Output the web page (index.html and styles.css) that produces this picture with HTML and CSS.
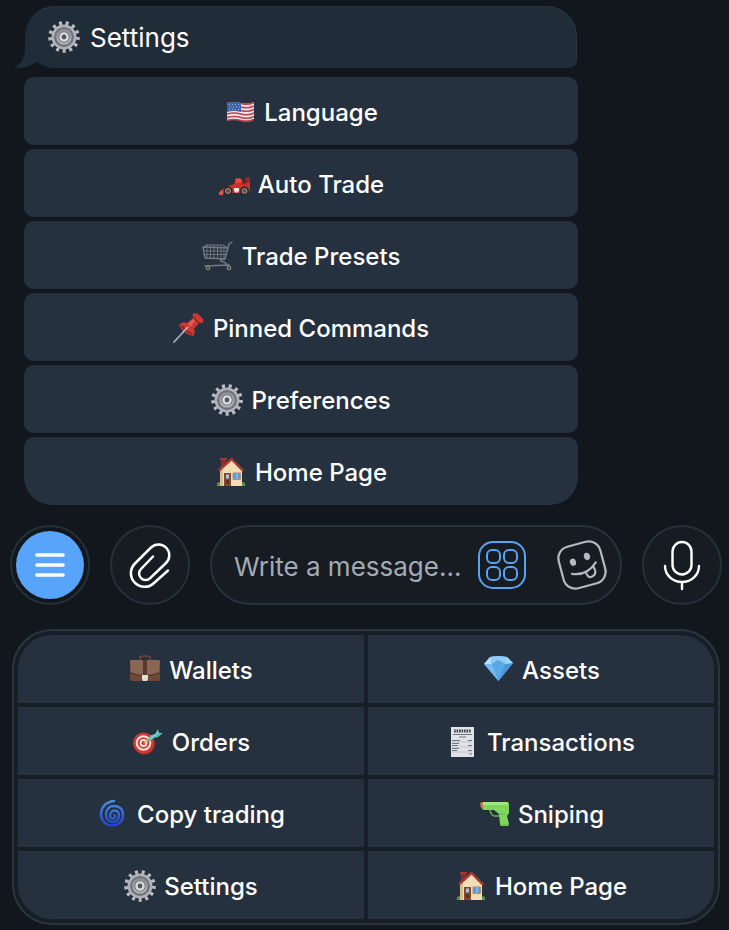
FILE: index.html
```html
<!DOCTYPE html>
<html lang="en">

<head>
    <meta charset="UTF-8">
    <meta name="viewport" content="width=device-width, initial-scale=1.0">
    <title>Settings</title>
    <link rel="stylesheet" href="styles.css">
</head>

<body>
    <!-- Icons used more than once -->
    <svg class="icon-defs" aria-hidden="true">
        <defs>
            <linearGradient id="metal" x1="0" y1="0" x2="0" y2="1">
                <stop offset="0" stop-color="#8b8d94" />
                <stop offset="1" stop-color="#b9bac0" />
            </linearGradient>
            <symbol id="gear" viewBox="0 0 32 32">
                <circle cx="16" cy="16" r="13.500" fill="none" stroke="#bcbdc4" stroke-width="4.600" pathLength="26" stroke-dasharray="0.900 1.100" />
                <circle cx="16" cy="16" r="11" fill="none" stroke="#b0b1b8" stroke-width="3" />
                <circle cx="16" cy="16" r="9.700" fill="#6c6e74" />
                <circle cx="16" cy="16" r="8" fill="url(#metal)" stroke="#85878d" stroke-width="1" />
                <circle cx="16" cy="16" r="5.600" fill="#66686f" />
                <circle cx="16" cy="16" r="3.600" fill="#54575e" stroke="#dadbe0" stroke-width="2.400" />
            </symbol>
            <symbol id="house" viewBox="0 0 32 32">
                <path d="M2 30q-1-4 3-4h22q4 0 3 4z" fill="#5d9440" />
                <path d="M6 3h5v8H6z" fill="#8b2f26" />
                <path d="M5 2h7v2H5z" fill="#a8392d" />
                <path d="M5 14L16.500 4L27 15v15H5z" fill="#f0ddb5" />
                <path d="M5 14l3-3v19H5z" fill="#d8bf91" />
                <path d="M4 14.500L16.500 3L28.500 15" fill="none" stroke="#a83a2f" stroke-width="2.400" stroke-linejoin="round" />
                <path d="M9 17h7v13H9z" fill="#81492d" />
                <path d="M11 18.500h3v4h-3z" fill="#a5c6dc" />
                <path d="M11 24h3v4h-3z" fill="#5f321e" />
                <path d="M18 17h7.500v6.500H18z" fill="#5d9bd6" stroke="#b48f67" />
                <path d="M22 17.500v5.500" stroke="#a9cdec" />
            </symbol>
        </defs>
    </svg>

    <main class="chat">
        <!-- Bot message -->
        <section class="message">
            <div class="bubble">
                <svg class="bubble-tail" viewBox="0 0 32 30" aria-hidden="true">
                    <path d="M12 0v10C12 20 8 26 1 29.500C10 31 17 28 24 24L32 12V0z" />
                </svg>
                <svg class="icon" aria-hidden="true"><use href="#gear" /></svg>
                <span>Settings</span>
            </div>
            <div class="inline-keyboard">
                <button type="button" class="key">
                    <svg class="icon" viewBox="0 0 32 32" aria-hidden="true">
                        <path d="M3 7q7-2 14 0t13-1v17q-7 3-14 1T3 24z" fill="#e9e6ed" />
                        <path d="M3 7.500q7-2 14 0t13-1M3 11q7-2 14 0t13-1M3 14.500q7-2 14 0t13-1M3 18q7-2 14 0t13-1M3 21.500q7-2 14 0t13-1M3 24.500q7-2 14 0t13-1" fill="none" stroke="#c14652" stroke-width="1.600" />
                        <path d="M3 7q7-2 14 0v9q-7-2-14 0z" fill="#3d65a8" />
                        <path d="M5 8.500h11M6 11h10M5 13.500h11" stroke="#8fa8d2" stroke-dasharray="1 2" />
                    </svg>
                    <span>Language</span>
                </button>
                <button type="button" class="key">
                    <svg class="icon" viewBox="0 0 32 32" aria-hidden="true">
                        <path d="M1 26l2-4 8-4 5-2 2-5h6l1 5 3-1v-4l4-1v13l-4 2H3z" fill="#cf2f2a" />
                        <path d="M17 11l5-1 2 4-6 1z" fill="#ec4b3d" />
                        <path d="M27 10l5-1v5l-4 1z" fill="#a5211f" />
                        <path d="M1 27v-3l5-2-1 5z" fill="#e65349" />
                        <circle cx="10" cy="23" r="4.500" fill="#26272a" />
                        <circle cx="26.500" cy="23" r="4.500" fill="#26272a" />
                        <circle cx="10" cy="23" r="2.500" fill="#565143" stroke="#a39b83" />
                        <circle cx="26.500" cy="23" r="2.500" fill="#565143" stroke="#a39b83" />
                        <path d="M16 20h5v3l-2.500 2-2.500-2z" fill="#f3e4e2" />
                    </svg>
                    <span>Auto Trade</span>
                </button>
                <button type="button" class="key">
                    <svg class="icon" viewBox="0 0 32 32" aria-hidden="true">
                        <g fill="none" stroke="#737b82" stroke-linecap="round">
                            <path d="M30 2l-3 2-4 15-20-1L1 7l25 1" stroke-width="1.400" />
                            <path d="M4 5h17l5 3M4 5L1 8M2 11h23M2 14.500h22M5 5v13M8.500 5v13M12 5v13M15.500 5v14M19 5v14M22 6v13" stroke-width="0.900" />
                            <path d="M22 19q-7 2 0 3l5 4M3 26l24-1" stroke-width="1.500" />
                        </g>
                        <g fill="#343a41" stroke="#96998f">
                            <circle cx="6" cy="28" r="1.800" />
                            <circle cx="27" cy="28" r="1.800" />
                        </g>
                    </svg>
                    <span>Trade Presets</span>
                </button>
                <button type="button" class="key">
                    <svg class="icon" viewBox="0 0 32 32" aria-hidden="true">
                        <path d="M1 30L14 16" stroke="#9eb2c0" stroke-width="1.800" stroke-linecap="round" />
                        <path d="M6 13q3-4 8-2l6-5q-1-4 1-5 5 0 9 6 1 3-1 4h-3l-5 6q2 4-1 7Q10 22 6 13z" fill="#cc3832" />
                        <path d="M8 13q5 7 11 9M21 5q2 5 6 6" fill="none" stroke="#8f2426" stroke-width="1.500" />
                        <path d="M15 12l5-5 2 2-5 6z" fill="#e95d50" />
                        <path d="M10 20l5-5" stroke="#c2ccd3" stroke-width="1.500" />
                    </svg>
                    <span>Pinned Commands</span>
                </button>
                <button type="button" class="key">
                    <svg class="icon" aria-hidden="true"><use href="#gear" /></svg>
                    <span>Preferences</span>
                </button>
                <button type="button" class="key">
                    <svg class="icon" aria-hidden="true"><use href="#house" /></svg>
                    <span>Home Page</span>
                </button>
            </div>
        </section>

        <!-- Message input -->
        <form class="composer">
            <button type="button" class="round-btn menu-btn" aria-label="Menu">
                <svg viewBox="0 0 68 68" aria-hidden="true">
                    <path d="M21 24h26M21 34h26M21 44h26" stroke="#fff" stroke-width="3.600" stroke-linecap="round" />
                </svg>
            </button>
            <button type="button" class="round-btn" aria-label="Attach file">
                <svg viewBox="0 0 76 76" aria-hidden="true">
                    <path d="M41 29.500L29 42a6.500 6.500 0 0 0 9.200 9.200L54 36A10.500 10.500 0 0 0 39 20.500L23 36.500A13.500 13.500 0 0 0 42 56L56 43.500" fill="none" stroke="#fff" stroke-width="2.500" stroke-linecap="round" stroke-linejoin="round" />
                </svg>
            </button>
            <div class="message-field">
                <input type="text" class="message-input" placeholder="Write a message..." aria-label="Message">
                <button type="button" class="field-btn" aria-label="Bot keyboard">
                    <svg viewBox="0 0 52 52" fill="none" stroke="#59a3f3" stroke-width="2" aria-hidden="true">
                        <rect x="3" y="3" width="46" height="46" rx="14" />
                        <rect x="11" y="11" width="13" height="13" rx="5" />
                        <rect x="28" y="11" width="13" height="13" rx="5" />
                        <rect x="11" y="28" width="13" height="13" rx="5" />
                        <rect x="28" y="28" width="13" height="13" rx="5" />
                    </svg>
                </button>
                <button type="button" class="field-btn" aria-label="Stickers">
                    <svg viewBox="0 0 52 52" fill="none" stroke="#b3b9c3" stroke-width="2.200" stroke-linecap="round" aria-hidden="true">
                        <g transform="rotate(-15 26 26)">
                            <rect x="4.500" y="4.500" width="43" height="43" rx="12" />
                            <ellipse cx="18" cy="21" rx="2" ry="2.600" fill="#b3b9c3" />
                            <ellipse cx="33" cy="19" rx="2" ry="2.600" fill="#b3b9c3" />
                            <path d="M14 32q14 6 26-5M28 34.500v1q1 6 6 4 5-2 2.500-9" />
                        </g>
                    </svg>
                </button>
            </div>
            <button type="button" class="round-btn" aria-label="Record voice message">
                <svg viewBox="0 0 76 76" fill="none" stroke="#fff" stroke-width="2.400" stroke-linecap="round" aria-hidden="true">
                    <rect x="28.500" y="15" width="19" height="32.500" rx="9.500" />
                    <path d="M21 39a17 16 0 0 0 34 0M38 55v7" />
                </svg>
            </button>
        </form>

        <!-- Reply keyboard -->
        <section class="reply-keyboard">
            <button type="button" class="key">
                <svg class="icon" viewBox="0 0 32 32" aria-hidden="true">
                    <path d="M11 6V3q5-2 10 0v3" fill="none" stroke="#6d4434" stroke-width="1.600" />
                    <rect x="1" y="6" width="30" height="21" rx="2" fill="#6e4a3b" />
                    <path d="M1 8q0-2 2-2h26q2 0 2 2l-1 10q-14 6-28 0z" fill="#8a6654" />
                    <path d="M1 19q15 6 30 0" fill="none" stroke="#50352b" />
                    <path d="M14 6h4v15h-4z" fill="#57382f" />
                    <path d="M13 21h6v4l-1 2h-4l-1-2z" fill="#e1dfd6" />
                </svg>
                <span>Wallets</span>
            </button>
            <button type="button" class="key">
                <svg class="icon" viewBox="0 0 32 32" aria-hidden="true">
                    <path d="M8 3q8-2 17 0l6 6-14.500 18L2 10z" fill="#58a8e9" />
                    <path d="M8 3l2 7H2z" fill="#b6e0fb" />
                    <path d="M8 3q8-2 17 0l-2 7-7-4-6 4z" fill="#8fcbf5" />
                    <path d="M10 10l6-4 7 4z" fill="#5ea6e6" />
                    <path d="M2 10h8l6.500 17z" fill="#75b9ed" />
                    <path d="M23 10l8-1-14.500 18z" fill="#4a98da" />
                    <path d="M25 3l6 6-8 1z" fill="#a1d5f9" />
                </svg>
                <span>Assets</span>
            </button>
            <button type="button" class="key">
                <svg class="icon" viewBox="0 0 32 32" aria-hidden="true">
                    <circle cx="12.500" cy="18" r="10.500" fill="#a82b27" />
                    <circle cx="11.500" cy="17" r="10.500" fill="#d0392f" />
                    <circle cx="11.500" cy="17" r="6.800" fill="#d0392f" stroke="#f4e4dd" stroke-width="2" />
                    <circle cx="11.500" cy="17" r="3" fill="#d0392f" stroke="#f4e4dd" stroke-width="1.800" />
                    <path d="M12 17l7-5" stroke="#d7c65c" stroke-width="1.500" />
                    <path d="M16 13l3-4 4-1 3-5 1 4 4 0-5 4-4 1-5 4z" fill="#5fb9b6" />
                    <path d="M18 13l9-7" stroke="#9cdad2" />
                </svg>
                <span>Orders</span>
            </button>
            <button type="button" class="key">
                <svg class="icon" viewBox="0 0 32 32" aria-hidden="true">
                    <path d="M4 1h23v30H4z" fill="#e2e3e8" />
                    <path d="M7 5h17" stroke="#4b4c52" stroke-width="3" stroke-dasharray="1.700 0.800" />
                    <path d="M6 8.500h19M12 11h7M5 14.500h8M21 14.500h4M5 17.500h7M5 19.500h6M21 19.500h4M5 22.500h7M5 24.500h5M21 24.500h4M22 28h3" stroke="#74767d" />
                    <path d="M4 16h21M4 21h21M4 26h21" stroke="#c3c5cc" />
                </svg>
                <span>Transactions</span>
            </button>
            <button type="button" class="key">
                <svg class="icon" viewBox="0 0 32 32" aria-hidden="true">
                    <defs>
                        <linearGradient id="swirl" x1="0" y1="0" x2="0" y2="1">
                            <stop offset="0" stop-color="#478fe0" />
                            <stop offset="1" stop-color="#2145d8" />
                        </linearGradient>
                    </defs>
                    <path d="M17 3C8 4 4 10 4 16c0 7 5 11.500 11 11.500 7 0 11.500-5 11-11.500C26 11 22 8 17 8s-8 4-8 8.500 3 7.500 7 7.500 6-3 6-6.500-2-5-4.500-5S13 15 13 17.500s2 3.500 3.500 3 2.500-2 1-3.500" fill="none" stroke="url(#swirl)" stroke-width="2.400" stroke-linecap="round" />
                </svg>
                <span>Copy trading</span>
            </button>
            <button type="button" class="key">
                <svg class="icon" viewBox="0 0 32 32" aria-hidden="true">
                    <path d="M12 12q1 6 5 6h5v-6" fill="none" stroke="#68ad5b" stroke-width="1.500" />
                    <path d="M4 4h25q2 0 2 2v9l-2 3 2 8q0 2-2 2h-5q-2 0-2-2l-1-10-5-4H6l-2-1z" fill="#7fd65b" />
                    <path d="M5 4h24l1 3H5z" fill="#a0e87a" />
                    <path d="M2 5l3-1v7l-2-1z" fill="#cc7541" />
                    <path d="M22 16h6M24 27h5" stroke="#58bd45" />
                </svg>
                <span>Sniping</span>
            </button>
            <button type="button" class="key">
                <svg class="icon" aria-hidden="true"><use href="#gear" /></svg>
                <span>Settings</span>
            </button>
            <button type="button" class="key">
                <svg class="icon" aria-hidden="true"><use href="#house" /></svg>
                <span>Home Page</span>
            </button>
        </section>
    </main>
</body>

</html>
```
FILE: styles.css
```css
/* General body styling */
* {
    box-sizing: border-box;
}

body {
    font-family: Inter, "Liberation Sans", sans-serif;
    background-color: #11171d;
    margin: 0;
    color: #fff;
}

button,
input {
    font: inherit;
    color: inherit;
    border: none;
    padding: 0;
    background: none;
}

button {
    cursor: pointer;
}

.icon-defs {
    position: absolute;
    width: 0;
    height: 0;
}

.icon {
    width: 32px;
    height: 32px;
    flex: none;
}

.chat {
    padding-top: 6px;
}

/* Bot message */
.message {
    width: 76%;
    margin-left: 24px;
}

.bubble {
    position: relative;
    display: flex;
    align-items: center;
    gap: 10px;
    height: 62px;
    margin: 0 1px 9px;
    padding: 0 22px;
    font-size: 26px;
    background-color: #202c38;
    border: 1px solid #293541;
    border-left-color: #202c38;
    border-bottom-color: #202c38;
    border-radius: 30px 30px 8px 30px;
}

.bubble-tail {
    position: absolute;
    left: -13px;
    bottom: -1px;
    width: 32px;
    height: 30px;
    fill: #202c38;
}

.inline-keyboard {
    display: grid;
    gap: 4px;
}

.key {
    display: flex;
    align-items: center;
    justify-content: center;
    gap: 8px;
    height: 68px;
    padding-top: 2px;
    font-size: 24px;
    font-weight: 500;
    background-color: #263140;
}

.inline-keyboard .key {
    border-radius: 10px;
}

.inline-keyboard .key:last-child {
    border-radius: 10px 10px 28px 28px;
}

/* Message input */
.composer {
    display: flex;
    gap: 20px;
    padding: 20px 7px 24px 10px;
}

.round-btn {
    flex: none;
    width: 80px;
    height: 80px;
    background-color: #171b22;
    border: 2px solid #26303a;
    border-radius: 50%;
}

.round-btn svg {
    display: block;
    width: 100%;
}

.menu-btn {
    padding: 4px;
    background-color: #11171d;
}

.menu-btn svg {
    background-color: #58a4fb;
    border-radius: 50%;
}

.message-field {
    display: flex;
    align-items: center;
    flex: 1;
    min-width: 0;
    gap: 28px;
    padding: 0 12px 0 22px;
    background-color: #171c23;
    border: 2px solid #26323c;
    border-radius: 40px;
}

.message-input {
    flex: 1;
    min-width: 0;
    height: 52px;
    margin-right: -20px;
    padding-top: 2px;
    font-size: 26px;
    outline: none;
}

.message-input::placeholder {
    color: #a3abb6;
    opacity: 1;
}

.field-btn {
    flex: none;
    width: 52px;
    height: 52px;
}

.field-btn svg {
    display: block;
    width: 100%;
}

/* Reply keyboard */
.reply-keyboard {
    display: grid;
    grid-template-columns: 1fr 1fr;
    gap: 4px;
    margin: 0 9px 6px 12px;
    padding: 4px;
    background-color: #171e25;
    border: 2px solid #2a363f;
    border-radius: 40px;
}

.reply-keyboard .key:nth-child(1) {
    border-top-left-radius: 34px;
}

.reply-keyboard .key:nth-child(2) {
    border-top-right-radius: 34px;
}

.reply-keyboard .key:nth-last-child(2) {
    border-bottom-left-radius: 34px;
}

.reply-keyboard .key:last-child {
    border-bottom-right-radius: 34px;
}
```
